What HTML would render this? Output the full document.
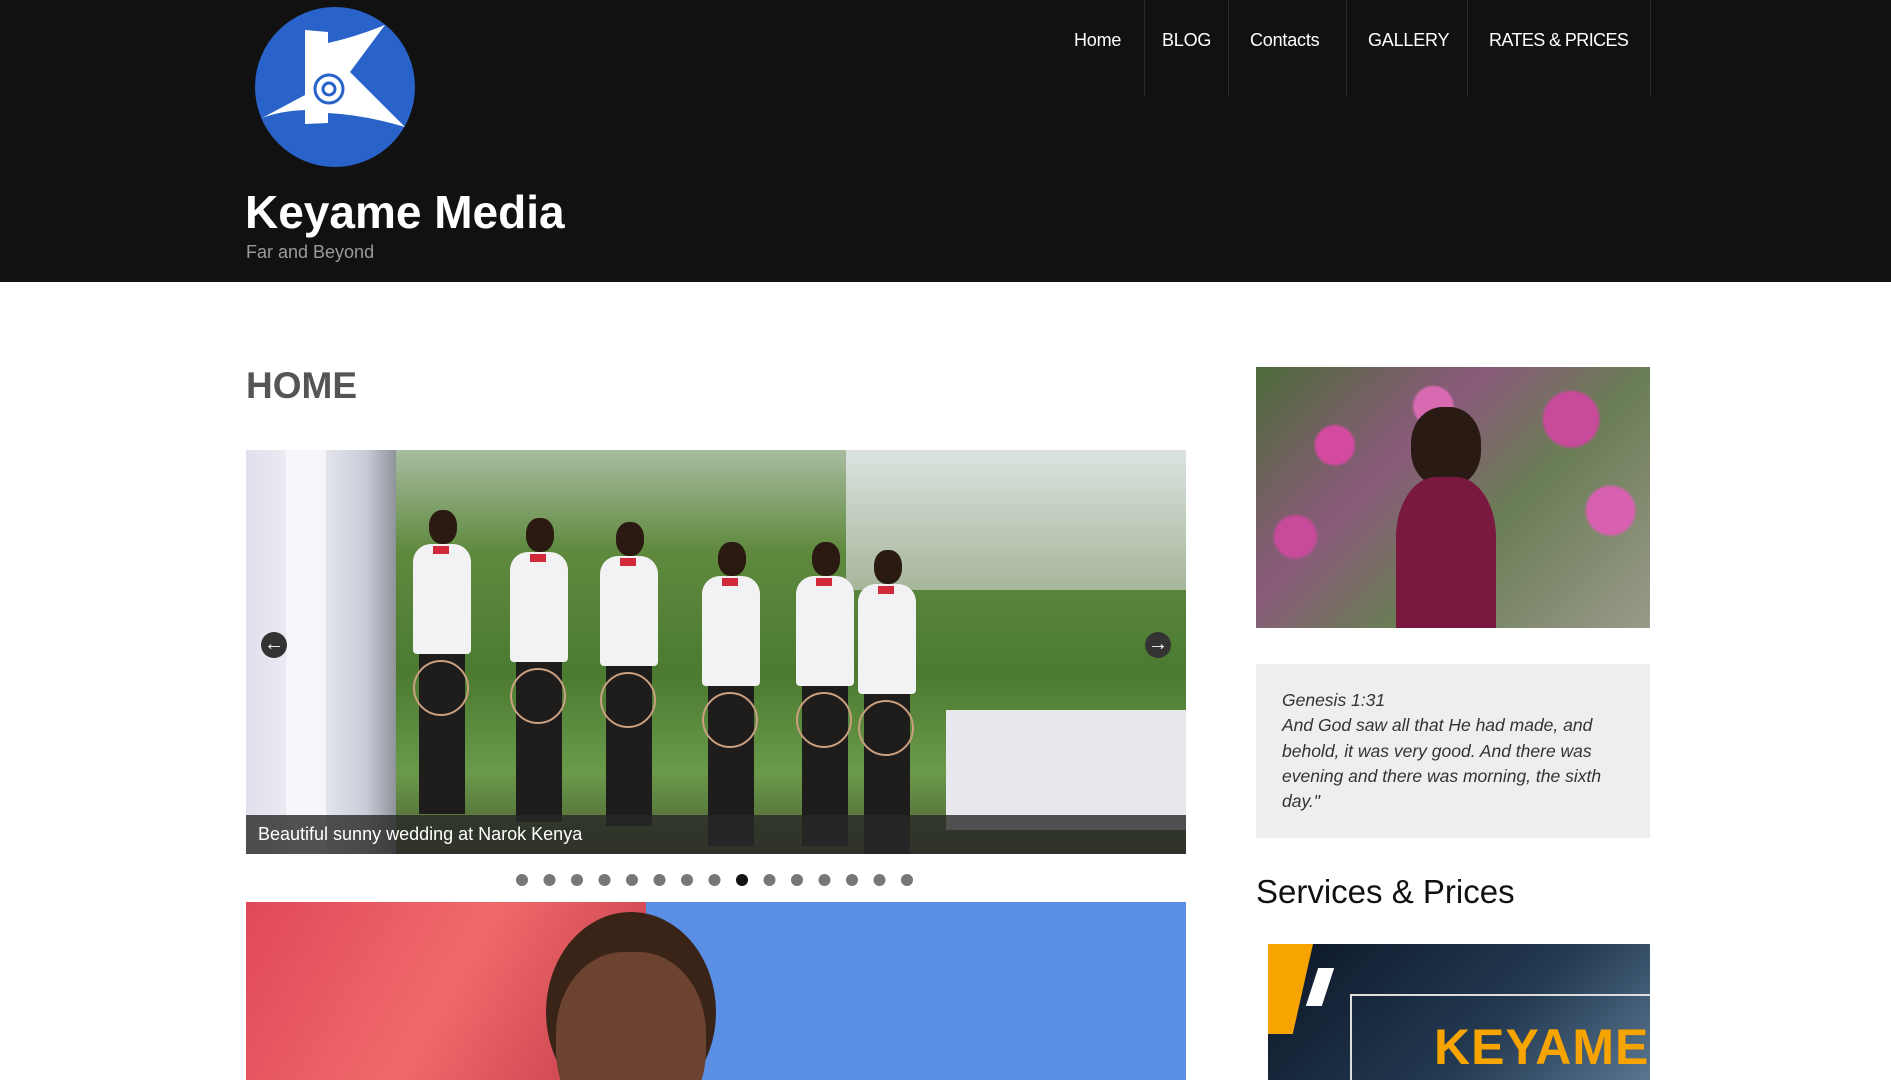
<!DOCTYPE html>
<html><head><meta charset="utf-8"><style>
*{margin:0;padding:0;box-sizing:border-box}
html,body{width:1891px;height:1080px;overflow:hidden;background:#fff;font-family:"Liberation Sans",sans-serif}
.hdr{position:absolute;left:0;top:0;width:1891px;height:282px;background:#111}
.nav{position:absolute;top:0;height:97px;color:#fff;font-size:18px;line-height:80px;letter-spacing:-0.2px}
.sep{position:absolute;top:0;width:1px;height:97px;background:#2a2a2a}
.abs{position:absolute}
.man{position:absolute;width:62px;height:300px}
.man .h{position:absolute;left:18px;top:0;width:28px;height:34px;border-radius:45%;background:#2a1a12}
.man .s{position:absolute;left:2px;top:34px;width:58px;height:110px;border-radius:18px 18px 4px 4px;background:#f2f2f4}
.man .p{position:absolute;left:8px;top:144px;width:46px;height:160px;background:#1f1c1c}
.man .b{position:absolute;left:22px;top:36px;width:16px;height:8px;background:#d22a3a}
.man .r{position:absolute;left:2px;top:150px;width:56px;height:56px;border-radius:50%;border:2px solid #c9a080}
</style></head><body>
<div class="hdr">
<svg class="abs" style="left:255px;top:7px" width="160" height="160" viewBox="0 0 160 160">
<circle cx="80" cy="80" r="80" fill="#2962c9"/>
<path d="M50 23 L73 25 L73 36 Q100 30 130 18 L95 65 L150 120 Q110 108 73 106 L73 116 L50 117 L50 103 Q25 104 7 111 L50 88 Z" fill="#fff"/>
<circle cx="74" cy="82" r="14" fill="none" stroke="#2962c9" stroke-width="3"/>
<circle cx="74" cy="82" r="6" fill="none" stroke="#2962c9" stroke-width="3"/>
</svg>
<div class="abs" style="left:245px;top:184px;color:#fff;font-size:46px;font-weight:bold;line-height:56px">Keyame Media</div>
<div class="abs" style="left:246px;top:242px;color:#9a9a9a;font-size:18px">Far and Beyond</div>
<div class="nav" style="left:1074px">Home</div>
<div class="sep" style="left:1144px"></div>
<div class="nav" style="left:1162px">BLOG</div>
<div class="sep" style="left:1228px"></div>
<div class="nav" style="left:1250px">Contacts</div>
<div class="sep" style="left:1346px"></div>
<div class="nav" style="left:1368px">GALLERY</div>
<div class="sep" style="left:1467px"></div>
<div class="nav" style="left:1489px;letter-spacing:-0.6px">RATES &amp; PRICES</div>
<div class="sep" style="left:1650px"></div>
</div>

<div class="abs" style="left:246px;top:365px;font-size:37px;font-weight:bold;color:#555">HOME</div>

<div class="abs" style="left:246px;top:450px;width:940px;height:404px;overflow:hidden;background:linear-gradient(180deg,#a8bca0 0%,#5f8a3e 25%,#4b7a30 55%,#6a9a4a 80%,#4a5a30 100%)">
  <div class="abs" style="left:0;top:0;width:150px;height:404px;background:linear-gradient(90deg,#dfe0ec,#f0f0f6 40%,#c9ccd8 80%,#8f939a)"></div>
  <div class="abs" style="left:40px;top:0;width:40px;height:404px;background:#f6f6fa"></div>
  <div class="abs" style="left:600px;top:0;width:340px;height:140px;background:linear-gradient(180deg,#dbe3e0,#a6b69a)"></div>
  <div class="abs" style="left:700px;top:260px;width:240px;height:120px;background:#e8e8ee"></div>
  <div class="man" style="left:165px;top:60px"><div class="h"></div><div class="s"></div><div class="b"></div><div class="p"></div><div class="r"></div></div>
  <div class="man" style="left:262px;top:68px"><div class="h"></div><div class="s"></div><div class="b"></div><div class="p"></div><div class="r"></div></div>
  <div class="man" style="left:352px;top:72px"><div class="h"></div><div class="s"></div><div class="b"></div><div class="p"></div><div class="r"></div></div>
  <div class="man" style="left:454px;top:92px"><div class="h"></div><div class="s"></div><div class="b"></div><div class="p"></div><div class="r"></div></div>
  <div class="man" style="left:548px;top:92px"><div class="h"></div><div class="s"></div><div class="b"></div><div class="p"></div><div class="r"></div></div>
  <div class="man" style="left:610px;top:100px"><div class="h"></div><div class="s"></div><div class="b"></div><div class="p"></div><div class="r"></div></div>
  <div class="abs" style="left:0;top:365px;width:940px;height:39px;background:rgba(40,40,40,.8)"></div>
  <div class="abs" style="left:12px;top:374px;color:#fff;font-size:18px">Beautiful sunny wedding at Narok Kenya</div>
  <div class="abs" style="left:15px;top:182px;width:26px;height:26px;border-radius:50%;background:#333;color:#fff;font-size:20px;line-height:25px;text-align:center">&larr;</div>
  <div class="abs" style="left:899px;top:182px;width:26px;height:26px;border-radius:50%;background:#333;color:#fff;font-size:20px;line-height:25px;text-align:center">&rarr;</div>
</div>

<div class="abs" style="left:516px;top:873px;width:400px;height:12px">
<svg width="400" height="12">
<g fill="#777">
<circle cx="6" cy="6" r="6"/><circle cx="33.5" cy="6" r="6"/><circle cx="61" cy="6" r="6"/><circle cx="88.5" cy="6" r="6"/><circle cx="116" cy="6" r="6"/><circle cx="143.5" cy="6" r="6"/><circle cx="171" cy="6" r="6"/><circle cx="198.5" cy="6" r="6"/>
<circle cx="253.5" cy="6" r="6"/><circle cx="281" cy="6" r="6"/><circle cx="308.5" cy="6" r="6"/><circle cx="336" cy="6" r="6"/><circle cx="363.5" cy="6" r="6"/><circle cx="391" cy="6" r="6"/>
</g><circle cx="226" cy="6" r="6" fill="#111"/></svg></div>

<div class="abs" style="left:246px;top:902px;width:940px;height:178px;overflow:hidden;background:#5b8fe6">
  <div class="abs" style="left:0;top:0;width:400px;height:178px;background:linear-gradient(120deg,#e0485a,#f06a6a 50%,#c23a4a)"></div>
  <div class="abs" style="left:300px;top:10px;width:170px;height:200px;border-radius:50%;background:#3a2418"></div>
  <div class="abs" style="left:310px;top:50px;width:150px;height:180px;border-radius:45%;background:#6b4330"></div>
</div>

<div class="abs" style="left:1256px;top:367px;width:394px;height:261px;overflow:hidden;background:linear-gradient(135deg,#4e6b3a,#8a5a7a 35%,#6a7d55 60%,#9a9a8a)">
  <div class="abs" style="left:0;top:0;width:394px;height:261px;background:radial-gradient(circle at 20% 30%,#d44aa0 0 5%,transparent 6%),radial-gradient(circle at 45% 15%,#d86ab2 0 6%,transparent 7%),radial-gradient(circle at 80% 20%,#c84a9a 0 7%,transparent 8%),radial-gradient(circle at 90% 55%,#d860b0 0 6%,transparent 7%),radial-gradient(circle at 10% 65%,#c84a9a 0 5%,transparent 6%)"></div>
  <div class="abs" style="left:155px;top:40px;width:70px;height:80px;border-radius:45%;background:#2a1a14"></div>
  <div class="abs" style="left:140px;top:110px;width:100px;height:151px;border-radius:40% 40% 0 0;background:#7a1840"></div>
</div>

<div class="abs" style="left:1256px;top:664px;width:394px;height:174px;background:#eee"></div>
<div class="abs" style="left:1282px;top:688px;width:350px;font-size:17.5px;line-height:25.3px;font-style:italic;color:#333">Genesis 1:31<br>And God saw all that He had made, and behold, it was very good. And there was evening and there was morning, the sixth day."</div>

<div class="abs" style="left:1256px;top:871px;font-size:33px;color:#111;line-height:42px">Services &amp; Prices</div>

<div class="abs" style="left:1268px;top:944px;width:382px;height:136px;overflow:hidden;background:linear-gradient(135deg,#0c1626,#233a52 60%,#5a7690)">
  <div class="abs" style="left:0;top:0;width:45px;height:90px;background:#f7a400;clip-path:polygon(0 0,100% 0,55% 100%,0 100%)"></div>
  <div class="abs" style="left:44px;top:24px;width:16px;height:38px;background:#fff;transform:skewX(-18deg)"></div>
  <div class="abs" style="left:82px;top:50px;width:320px;height:100px;border:2px solid #ddd"></div>
  <div class="abs" style="left:166px;top:74px;font-size:50px;font-weight:bold;color:#f7a400;letter-spacing:1px">KEYAME</div>
</div>
</body></html>
